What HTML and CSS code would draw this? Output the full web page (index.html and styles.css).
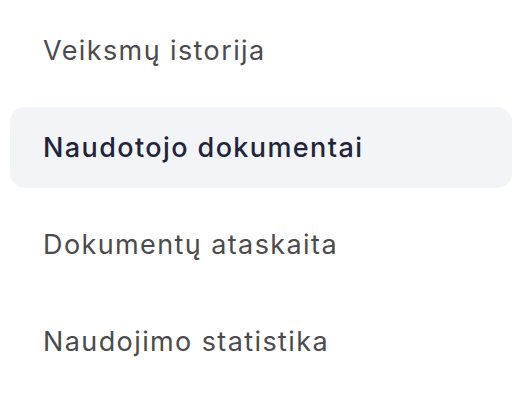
FILE: index.html
```html
<!DOCTYPE html>
<html lang="lt">
<head>
    <meta charset="UTF-8">
    <meta name="viewport" content="width=device-width, initial-scale=1.0">
    <title>Meniu</title>
    <link rel="stylesheet" href="styles.css">
</head>
<body>
    <nav class="side-menu">
        <a class="menu-item" href="#">Veiksmų istorija</a>
        <a class="menu-item active" href="#">Naudotojo dokumentai</a>
        <a class="menu-item" href="#">Dokumentų ataskaita</a>
        <a class="menu-item" href="#">Naudojimo statistika</a>
    </nav>
</body>
</html>
```

FILE: styles.css
```css
body {
    font-family: Inter, 'Noto Sans', sans-serif;
    background-color: #fff;
    margin: 0;
    padding: 10px;
}
.side-menu {
    display: flex;
    flex-direction: column;
    gap: 16px;
    width: 502px;
}
.menu-item {
    display: flex;
    align-items: center;
    height: 81px;
    padding-left: 33px;
    font-size: 27px;
    letter-spacing: 1.4px;
    color: #4b4b4d;
    text-decoration: none;
    border-radius: 15px;
}
.menu-item.active {
    background: #f3f4f8;
    color: #22243a;
    font-weight: 500;
}
```
